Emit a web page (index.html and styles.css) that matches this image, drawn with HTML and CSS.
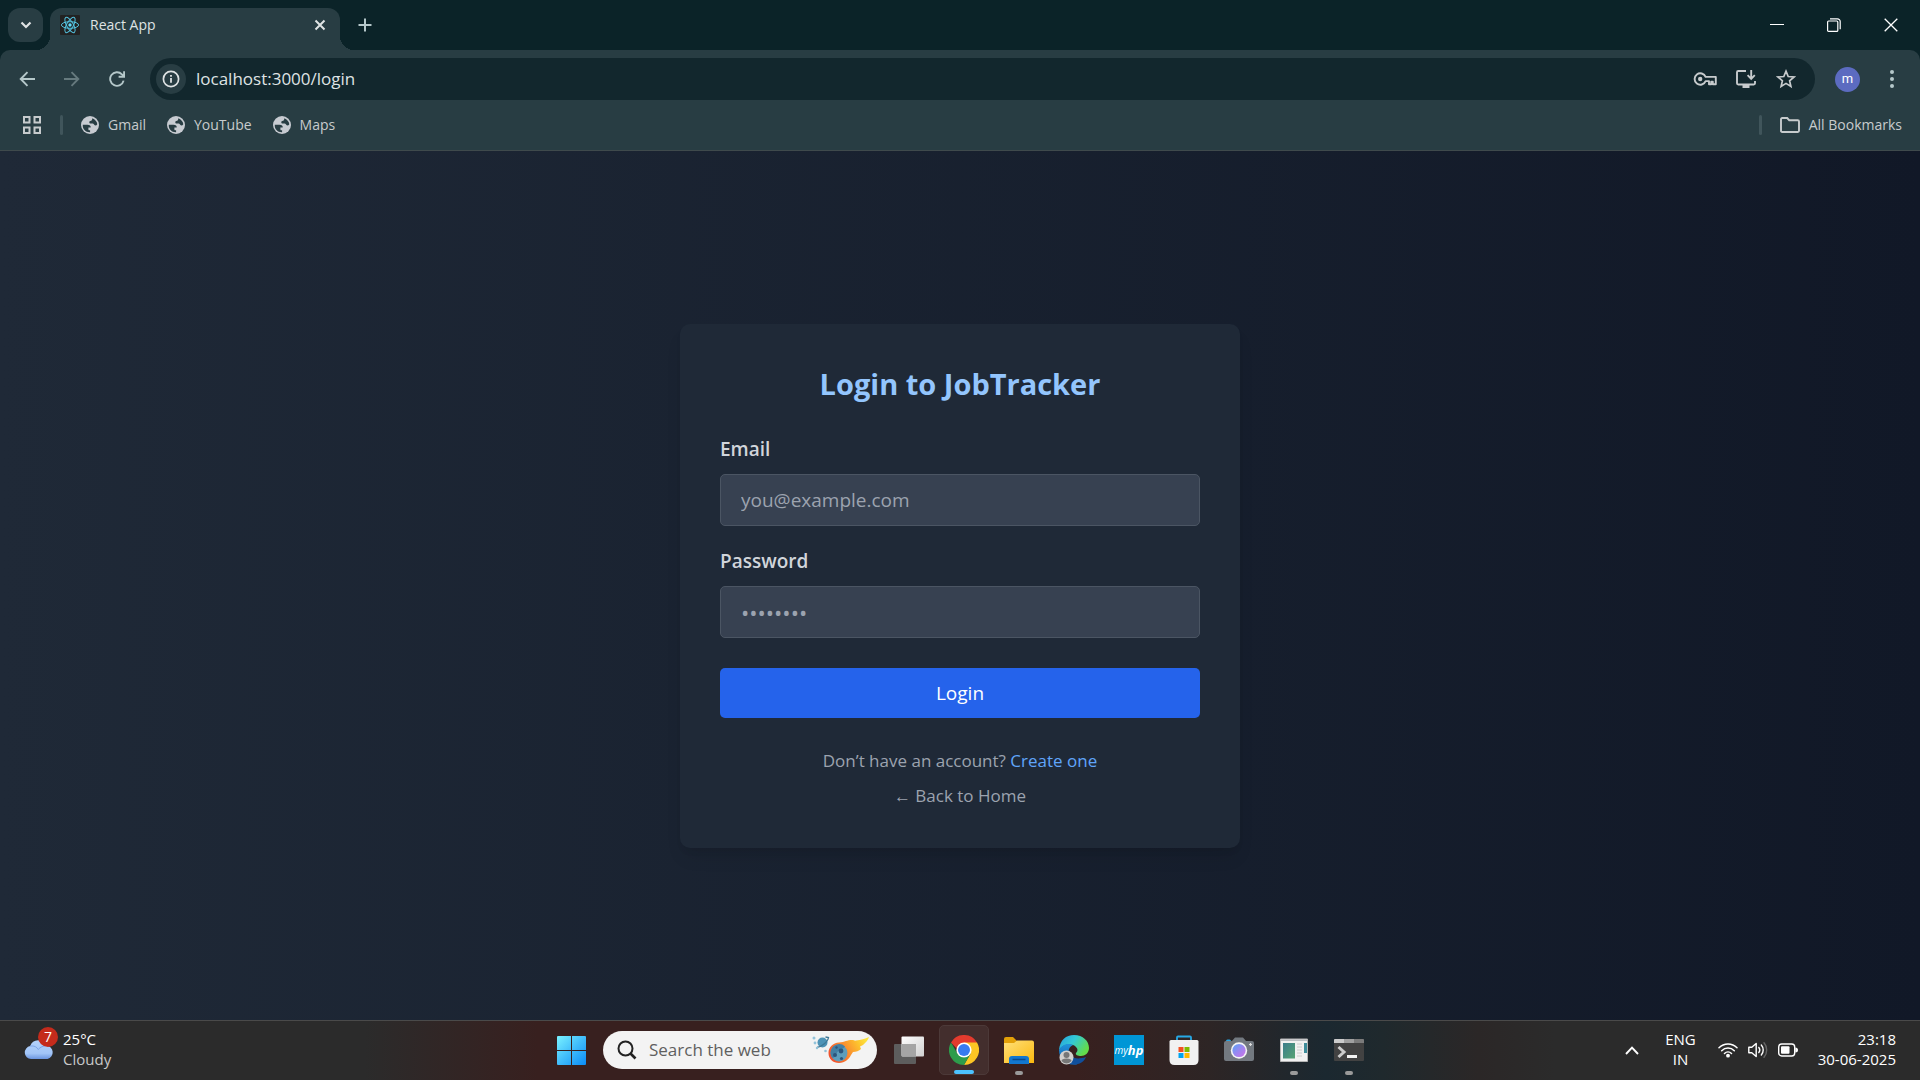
FILE: index.html
```html
<!DOCTYPE html>
<html lang="en">
<head>
<meta charset="utf-8">
<meta name="viewport" content="width=device-width, initial-scale=1">
<title>React App</title>
<link rel="stylesheet" href="styles.css">
</head>
<body>
<svg width="0" height="0" class="sprites" aria-hidden="true">
  <symbol id="globe" viewBox="0 0 18 18"><circle cx="9" cy="9" r="9" fill="#c7cbd1"/><path d="M1.800 8.800h4.600c2.400 0 3.500 1 3.300 2.700H7.400v1.900c0 .9.800.9 1.700.9v2C4.700 16.500 1.300 13 1.800 8.800zM11.300 2.300c2.700 1 4.800 3.400 5 6-1 1.800-2.500 1.500-3.300.1-.5-.8-1.200-1.100-2.700-.9-1.500.1-2.100-.6-2-1.600.2-1.300 1.700-1.200 2.300-1.500.6-.4.600-1.100.7-2.100z" fill="#283d43"/></symbol>
</svg>
<div class="desktop">
  <header class="browser">
    <div class="tab-strip">
      <button class="tab-search" aria-label="Search tabs">
        <svg width="12" height="12" viewBox="0 0 12 12"><path d="M1.500 3.500 6 8l4.500-4.500" fill="none" stroke="currentColor" stroke-width="2.200"/></svg>
      </button>
      <div class="tab">
        <svg class="tab-icon" width="20" height="20" viewBox="0 0 20 20">
          <rect width="20" height="20" rx="1" fill="#222"/>
          <g fill="none" stroke="#53c1de" stroke-width="1">
            <ellipse cx="10" cy="10" rx="8.600" ry="3.300"/>
            <ellipse cx="10" cy="10" rx="8.600" ry="3.300" transform="rotate(60 10 10)"/>
            <ellipse cx="10" cy="10" rx="8.600" ry="3.300" transform="rotate(120 10 10)"/>
          </g>
          <circle cx="10" cy="10" r="1.700" fill="#61dafb"/>
        </svg>
        <span class="tab-title">React App</span>
        <button class="tab-close" aria-label="Close tab">
          <svg width="12" height="12" viewBox="0 0 12 12"><path d="M1.500 1.500l9 9M10.500 1.500l-9 9" stroke="currentColor" stroke-width="2"/></svg>
        </button>
      </div>
      <button class="new-tab" aria-label="New tab">
        <svg width="14" height="14" viewBox="0 0 14 14"><path d="M7 .5v13M.5 7h13" stroke="currentColor" stroke-width="2"/></svg>
      </button>
      <div class="window-controls">
        <button aria-label="Minimize"><svg width="14" height="14" viewBox="0 0 14 14"><path d="M0 6.500h14" stroke="currentColor"/></svg></button>
        <button aria-label="Restore"><svg width="14" height="14" viewBox="0 0 14 14"><g fill="none" stroke="currentColor" stroke-width="1.200"><rect x=".6" y="3" width="10.200" height="10.400" rx="1"/><path d="M3 .8h7.400a2.800 2.800 0 0 1 2.800 2.800v7.600"/></g></svg></button>
        <button aria-label="Close"><svg width="14" height="14" viewBox="0 0 14 14"><path d="M.7.7l12.600 12.600M13.300.7.7 13.300" stroke="currentColor" stroke-width="1.300"/></svg></button>
      </div>
    </div>

    <div class="toolbar">
      <button class="nav-button" aria-label="Back"><svg width="16" height="16" viewBox="0 0 16 16"><path d="M16 8H2M8.500 1.200 1.700 8l6.800 6.800" fill="none" stroke="currentColor" stroke-width="1.900"/></svg></button>
      <button class="nav-button disabled" aria-label="Forward" disabled><svg width="16" height="16" viewBox="0 0 16 16"><path d="M0 8h14M7.500 1.200 14.300 8l-6.800 6.800" fill="none" stroke="currentColor" stroke-width="1.900"/></svg></button>
      <button class="nav-button" aria-label="Reload"><svg width="16" height="16" viewBox="0 0 16 16"><path d="M14.600 9.600A6.800 6.800 0 1 1 12.900 3.300L15 5.400M15.100.3v5.400H9.600" fill="none" stroke="currentColor" stroke-width="1.900"/></svg></button>
      <div class="address-bar">
        <button class="site-info" aria-label="Site information"><svg width="18" height="18" viewBox="0 0 18 18"><circle cx="9" cy="9" r="7.600" fill="none" stroke="currentColor" stroke-width="1.700"/><path d="M9 8v4.800M9 5v1.800" stroke="currentColor" stroke-width="1.800"/></svg></button>
        <input class="url" type="text" aria-label="Address" value="localhost:3000/login">
        <div class="address-actions">
          <button aria-label="Passwords"><svg width="24" height="18" viewBox="0 0 24 18"><path d="M12.600 6.900A5.700 5.700 0 1 0 12.600 11.100H16v3.200h2.200v-2.600h1.600v2.600h3V6.900z" fill="none" stroke="currentColor" stroke-width="1.900" stroke-linejoin="round"/><circle cx="7.200" cy="9" r="2.200" fill="currentColor"/></svg></button>
          <button aria-label="Install app"><svg width="22" height="20" viewBox="0 0 22 20"><path d="M11 2H3.200Q2 2 2 3.200v11.100q0 1.200 1.200 1.200h15.600q1.200 0 1.200-1.200V12" fill="none" stroke="currentColor" stroke-width="1.900"/><path d="M7.500 16h7v3h-7z" fill="currentColor"/><path d="M16.200 1v8.500M12.600 6.200l3.600 3.600 3.600-3.600" fill="none" stroke="currentColor" stroke-width="1.900"/></svg></button>
          <button aria-label="Bookmark this tab"><svg width="20" height="20" viewBox="0 0 20 20"><path d="M10 2.200l2.200 5.300 5.800.5-4.400 3.800 1.300 5.600L10 14.400l-4.900 3 1.300-5.600L2 8l5.800-.5z" fill="none" stroke="currentColor" stroke-width="1.700"/></svg></button>
        </div>
      </div>
      <button class="avatar" aria-label="Profile">m</button>
      <button class="menu-button" aria-label="Menu"><svg width="4" height="18" viewBox="0 0 4 18"><g fill="currentColor"><circle cx="2" cy="2" r="2"/><circle cx="2" cy="9" r="2"/><circle cx="2" cy="16" r="2"/></g></svg></button>
    </div>

    <nav class="bookmarks" aria-label="Bookmarks">
      <button class="apps" aria-label="Apps"><svg width="18" height="18" viewBox="0 0 18 18"><g fill="none" stroke="currentColor" stroke-width="2"><path d="M1 1h5.500v5.500H1zM11.500 1H17v5.500h-5.500zM1 11.500h5.500V17H1zM11.500 11.500H17V17h-5.500z"/></g></svg></button>
      <span class="divider"></span>
      <a class="bookmark" href="#gmail"><svg width="18" height="18"><use href="#globe"/></svg>Gmail</a>
      <a class="bookmark" href="#youtube"><svg width="18" height="18"><use href="#globe"/></svg>YouTube</a>
      <a class="bookmark" href="#maps"><svg width="18" height="18"><use href="#globe"/></svg>Maps</a>
      <div class="all-bookmarks">
        <span class="divider"></span>
        <button class="bookmark"><svg width="20" height="16" viewBox="0 0 20 16"><path d="M1 2.200Q1 1 2.200 1h5l2 2.200h8.600q1.200 0 1.200 1.200v9.400q0 1.200-1.200 1.200H2.200Q1 15 1 13.800z" fill="none" stroke="currentColor" stroke-width="1.900"/></svg>All Bookmarks</button>
      </div>
    </nav>
  </header>

  <main class="page">
    <section class="card">
      <h1 class="card-title">Login to JobTracker</h1>
      <form class="login-form">
        <div class="field">
          <label for="email">Email</label>
          <input id="email" type="email" placeholder="you@example.com">
        </div>
        <div class="field">
          <label for="password">Password</label>
          <input id="password" type="password" placeholder="••••••••">
        </div>
        <button class="login-button" type="submit">Login</button>
      </form>
      <div class="card-links">
        <p>Don’t have an account? <a class="create-link" href="#register">Create one</a></p>
        <p><a href="#home">← Back to Home</a></p>
      </div>
    </section>
  </main>

  <footer class="taskbar">
    <button class="weather">
      <span class="weather-icon">
        <svg width="30" height="20" viewBox="0 0 30 20">
          <defs><linearGradient id="cloud" x1="0" y1="0" x2="0" y2="1"><stop offset="0" stop-color="#b4d2fb"/><stop offset=".7" stop-color="#a2c5f7"/><stop offset="1" stop-color="#6b95e0"/></linearGradient></defs>
          <path d="M7 19a6.500 6.500 0 0 1-.8-12.900A8.600 8.600 0 0 1 22.300 5.600 6.800 6.800 0 0 1 23.500 19z" fill="url(#cloud)"/>
          <path d="M6.200 6.100c4-.8 6.800 1 8 3.400 2-2.400 5-3.600 8.100-3.900" fill="none" stroke="#7ea6e8" stroke-width="1"/>
        </svg>
        <span class="weather-badge">7</span>
      </span>
      <span class="two-line"><span>25°C</span><span class="muted">Cloudy</span></span>
    </button>

    <div class="apps-group">
      <button class="app" aria-label="Start"><svg width="29" height="29" viewBox="0 0 29 29"><defs><linearGradient id="win" gradientUnits="userSpaceOnUse" x1="0" y1="0" x2="29" y2="29"><stop offset="0" stop-color="#7af2ff"/><stop offset=".5" stop-color="#41bdfb"/><stop offset="1" stop-color="#0a8cf7"/></linearGradient></defs><path d="M0 1q0-1 1-1h13v14H0zM15 0h13q1 0 1 1v13H15zM0 15h14v14H1q-1 0-1-1zM15 15h14v13q0 1-1 1H15z" fill="url(#win)"/></svg></button>
      <label class="web-search">
        <svg width="20" height="20" viewBox="0 0 20 20"><circle cx="8.500" cy="8.500" r="7" fill="none" stroke="#222" stroke-width="2"/><path d="M13.500 13.500l5 5" stroke="#222" stroke-width="2.600"/></svg>
        <input type="search" placeholder="Search the web" aria-label="Search the web">
        <svg width="58" height="28" viewBox="0 0 58 28">
          <defs><linearGradient id="flame" gradientUnits="userSpaceOnUse" x1="20" y1="22" x2="54" y2="2"><stop offset="0" stop-color="#f0532f"/><stop offset=".4" stop-color="#f98a30"/><stop offset=".75" stop-color="#fdc22e"/><stop offset="1" stop-color="#fde63c"/></linearGradient></defs>
          <path d="M16.500 17C16.500 11 21 7 27 6.500 33 6 35 4 40 4c2 0 2 .8 4 .6 5-.6 9-1.600 13-3.600-1 3-3 5.500-6 8l-3 1.500 1 2.500c-2 2-5 3-8 3l-2 3c-2 4-6 8-12 8-6 0-10.500-4-10.500-10z" fill="url(#flame)"/>
          <circle cx="27" cy="17" r="8.400" fill="#5d9dbb"/><path d="M20 12a8.400 8.400 0 0 1 13-1.500c-2 3-6 3-8 6s-2 6-5 5q-3-4.500 0-9.500z" fill="#427fa3"/>
          <g fill="#2c557c"><circle cx="29" cy="15" r="2.400"/><circle cx="23" cy="19" r="2"/><circle cx="29.500" cy="22.500" r="1.600"/><circle cx="24.500" cy="11.500" r="1.200"/></g>
          <circle cx="10.500" cy="6.500" r="5" fill="#4e93b6"/><path d="M5 11C8 12 16 6 16.500 1.500l-3-.5" fill="none" stroke="#3f7896" stroke-width="1.300"/>
          <g fill="#93c3da"><circle cx="2" cy="2" r="1.500"/><circle cx="3" cy="7" r="1.400"/><circle cx="5" cy="12" r="1.200"/><circle cx="13.500" cy="15" r="1.300"/></g>
        </svg>
      </label>
      <button class="app" aria-label="Task view"><svg width="30" height="30" viewBox="0 0 30 30"><defs><linearGradient id="tv" x1="0" y1="0" x2="1" y2="1"><stop offset="0" stop-color="#fff"/><stop offset="1" stop-color="#d0d0d0"/></linearGradient></defs><rect x="0" y="9" width="22" height="20" rx="1" fill="#5d5d5d"/><rect x="7.500" y="1.500" width="22.500" height="20" rx="1" fill="url(#tv)"/><path d="M8 9h14v12H8z" fill="#a5a5a5"/></svg></button>
      <button class="app active" aria-label="Chrome"><svg width="30" height="30" viewBox="0 0 30 30"><path d="M2 7.500A15 15 0 0 1 28 7.500L15 15H9z" fill="#e33b2e"/><path d="M28 7.500A15 15 0 0 1 15 30l6.500-11.200L15 7.500z" fill="#fcc624"/><path d="M15 30A15 15 0 0 1 2 7.500L8.500 18.800 15 22.500l6.500-3.700z" fill="#2d9c4b"/><circle cx="15" cy="15" r="7.600" fill="#fff"/><circle cx="15" cy="15" r="6" fill="#377bf0"/></svg></button>
      <button class="app running" aria-label="File Explorer"><svg width="30" height="27" viewBox="0 0 30 27"><defs><linearGradient id="folder" x1="0" y1="0" x2="1" y2="1"><stop offset="0" stop-color="#ffe07a"/><stop offset="1" stop-color="#fbb90f"/></linearGradient></defs><path d="M0 2q0-2 2-2h7l4 4v5H0z" fill="#e3a008"/><path d="M0 6h10l3-2.500h15q2 0 2 2V26H0z" fill="url(#folder)"/><path d="M5 27v-5q0-3 3-3h14q3 0 3 3v5z" fill="#1277cf"/><path d="M8.500 22.500h13" stroke="#0a4a8c" stroke-width="1.500"/></svg></button>
      <button class="app" aria-label="Edge"><svg width="30" height="30" viewBox="0 0 30 30"><defs><linearGradient id="edge" x1="0" y1="0" x2="1" y2=".5"><stop offset="0" stop-color="#259fe0"/><stop offset=".5" stop-color="#33c9d4"/><stop offset="1" stop-color="#63dc4b"/></linearGradient><linearGradient id="edge2" x1="0" y1="0" x2="0" y2="1"><stop offset="0" stop-color="#1f94dc"/><stop offset="1" stop-color="#1259a8"/></linearGradient></defs><path d="M0 15C1 5 7 0 15 0c9 0 15 6 15 13 0 5-4 8-8 8-3 0-6-1-5-3 2-2 2-4 0-6-4-4-13-3-17 3z" fill="url(#edge)"/><path d="M0 15C3 9 10 8 14 10c-4 2-5 5-4 9 1 5 5 8 10 8l-2 2.600C8 31 0 25 0 15z" fill="url(#edge2)"/><path d="M11 15c-1 6 4 11 16 7-2 5-7 8-12 7-6-1-8-9-4-14z" fill="#104f9c"/><circle cx="7.500" cy="22.500" r="7" fill="#d2d0ce"/><circle cx="7.500" cy="20" r="3" fill="#777"/><path d="M2.500 26q0-2.500 5-2.500t5 2.500q-5 5-10 0z" fill="#777"/></svg></button>
      <button class="app" aria-label="myHP"><span class="hp-icon">my<b>hp</b></span></button>
      <button class="app" aria-label="Microsoft Store"><svg width="30" height="30" viewBox="0 0 30 30"><path d="M8 6V2.500q0-1 1-1h12q1 0 1 1V6" fill="none" stroke="#27a9e6" stroke-width="1.800"/><path d="M.5 6.500q0-1.500 1.500-1.500h26q1.500 0 1.500 1.500V25q0 5-5 5h-19q-5 0-5-5z" fill="#f1f1f1"/><path d="M9.500 12h5v5h-5z" fill="#f25022"/><path d="M15.500 12h5v5h-5z" fill="#7fba00"/><path d="M9.500 18h5v5h-5z" fill="#00a4ef"/><path d="M15.500 18h5v5h-5z" fill="#ffb900"/></svg></button>
      <button class="app" aria-label="Camera"><svg width="30" height="26" viewBox="0 0 30 26"><defs><linearGradient id="lens" x1="0" y1="0" x2="1" y2="1"><stop offset="0" stop-color="#56a6f5"/><stop offset=".5" stop-color="#9a86f0"/><stop offset="1" stop-color="#cf72e6"/></linearGradient></defs><path d="M2 6V4q0-1.500 1.500-1.500h2Q7 2.500 7 4v2z" fill="#2aa3e0"/><path d="M0 6q0-2 2-2h6l3-3.500h8L22 4h6q2 0 2 2v16q0 2-2 2H2q-2 0-2-2z" fill="#737980"/><circle cx="15" cy="13.500" r="8.200" fill="#f4f4f4"/><circle cx="15" cy="13.500" r="6.600" fill="url(#lens)"/><path d="M26.500 6v3M25 7.500h3" stroke="#ddd" stroke-width="1.200"/></svg></button>
      <button class="app running" aria-label="Window preview"><svg width="28" height="24" viewBox="0 0 28 24"><defs><linearGradient id="pane" x1="0" y1="0" x2="1" y2="1"><stop offset="0" stop-color="#3b7d8c"/><stop offset="1" stop-color="#57a373"/></linearGradient></defs><path d="M.5 1h27v22.500H.5z" fill="#f1f1f1" stroke="#b5b5b5"/><path d="M1 1.500h26V3H1z" fill="#bcbfc3"/><path d="M3 5h12v15.500H3z" fill="url(#pane)"/><path d="M17 6h5M17 9h5M17 12h5M17 15h5M17 18h5" stroke="#ccc"/><path d="M24 5h3v10h-3z" fill="#3e8c9a"/></svg></button>
      <button class="app running" aria-label="Terminal"><svg width="30" height="22" viewBox="0 0 30 22"><rect width="30" height="22" rx="1" fill="#424242"/><path d="M0 1q0-1 1-1h9v4H0z" fill="#cbcbcb"/><path d="M10 0h10v4H10z" fill="#a0a0a0"/><path d="M20 0h9q1 0 1 1v3H20z" fill="#7b7b7b"/><path d="M4.500 8l5.500 5-5.500 5" fill="none" stroke="#ccc" stroke-width="3"/><path d="M13 17.500h10" stroke="#f4f4f4" stroke-width="3"/></svg></button>
    </div>

    <div class="tray">
      <button class="tray-more" aria-label="Show hidden icons"><svg width="14" height="9" viewBox="0 0 14 9"><path d="M1 8l6-6.300L13 8" fill="none" stroke="currentColor" stroke-width="1.900"/></svg></button>
      <button class="two-line language"><span>ENG</span><span>IN</span></button>
      <button class="system" aria-label="Network, sound and battery">
        <svg width="20" height="16" viewBox="0 0 20 16"><g fill="none" stroke="currentColor" stroke-width="1.500" stroke-linecap="round"><path d="M1 5.800a12.700 12.700 0 0 1 18 0M3.700 8.700a8.900 8.900 0 0 1 12.600 0M6.500 11.500a5 5 0 0 1 7 0"/></g><circle cx="10" cy="13.700" r="1.900" fill="currentColor"/></svg>
        <svg width="20" height="18" viewBox="0 0 20 18"><g fill="none" stroke="currentColor" stroke-width="1.400" stroke-linecap="round" stroke-linejoin="round"><path d="M.8 6.300h3L8.200 2.500v13l-4.400-3.800h-3zM10.800 6.400a4.200 4.200 0 0 1 0 5.200M13.300 4a7.500 7.500 0 0 1 0 10"/><path d="M16 1.800a11 11 0 0 1 0 14.400" stroke="#666"/></g></svg>
        <svg width="20" height="14" viewBox="0 0 20 14"><rect x=".7" y="1" width="16" height="12" rx="3" fill="none" stroke="currentColor" stroke-width="1.400"/><rect x="3" y="3.300" width="8.500" height="7.400" rx="1" fill="currentColor"/><path d="M17.300 4.500q2.700 0 2.700 2.500t-2.700 2.500z" fill="currentColor"/></svg>
      </button>
      <button class="two-line clock"><span>23:18</span><span>30-06-2025</span></button>
    </div>
  </footer>
</div>
</body>
</html>
```

FILE: styles.css
```css
*,
*::before,
*::after {
  box-sizing: border-box;
}

body {
  margin: 0;
  font-family: "Open Sans", "Noto Sans", sans-serif;
  font-size: 15px;
  line-height: 20px;
  color: #fff;
  background: #111827;
}

button,
input {
  margin: 0;
  padding: 0;
  border: 0;
  background: none;
  color: inherit;
  font: inherit;
}

button {
  display: flex;
  align-items: center;
  justify-content: center;
}

a {
  color: inherit;
  text-decoration: none;
}

p,
h1 {
  margin: 0;
}

svg {
  display: block;
  flex: none;
}

.sprites {
  position: absolute;
}

.desktop {
  display: flex;
  flex-direction: column;
  min-height: 100vh;
}

/* Browser frame */

.browser {
  background: #0b2328;
  color: #dfe3e4;
}

.tab-strip {
  display: flex;
  height: 50px;
  padding: 8px 1px 0 8px;
}

.tab-search {
  width: 35px;
  height: 34px;
  margin-right: 7px;
  border-radius: 12px;
  background: #283d43;
}

.tab {
  position: relative;
  display: flex;
  align-items: center;
  gap: 10px;
  width: 290px;
  padding: 0 12px 8px 10px;
  border-radius: 12px 12px 0 0;
  background: #283d43;
}

/* Flared feet where the active tab meets the toolbar */
.tab::before,
.tab::after {
  content: "";
  position: absolute;
  bottom: 0;
  width: 14px;
  height: 14px;
}

.tab::before {
  right: 100%;
  background: radial-gradient(circle at 0 0, transparent 14px, #283d43 14px);
}

.tab::after {
  left: 100%;
  background: radial-gradient(circle at 100% 0, transparent 14px, #283d43 14px);
}

.tab-title {
  flex: 1;
  font-size: 14px;
}

.tab-close {
  width: 16px;
  height: 20px;
}

.new-tab {
  width: 34px;
  height: 34px;
  margin-left: 8px;
  color: #b5c8ca;
}

.window-controls {
  display: flex;
  margin-left: auto;
  color: #fff;
}

.window-controls button {
  width: 57px;
  height: 34px;
}

.toolbar {
  display: flex;
  align-items: center;
  height: 54px;
  padding: 4px 16px 0 10px;
  border-radius: 10px 10px 0 0;
  background: #283d43;
}

.nav-button {
  width: 34px;
  height: 34px;
  margin-right: 11px;
  color: #b5c8ca;
}

.nav-button.disabled {
  color: #667a7e;
}

.address-bar {
  display: flex;
  flex: 1;
  align-items: center;
  height: 42px;
  margin-left: 5px;
  padding: 0 18px 0 6px;
  border-radius: 21px;
  background: #12272d;
}

.site-info {
  width: 30px;
  height: 30px;
  border-radius: 15px;
  background: #283d43;
}

.url {
  flex: 1;
  margin-left: 10px;
  font-size: 17px;
}

.address-actions {
  display: flex;
  gap: 18px;
  color: #c7cbcd;
}

.address-actions button {
  min-width: 22px;
}

.avatar {
  width: 25px;
  height: 25px;
  margin-left: 20px;
  border-radius: 50%;
  background: #5c6bc0;
  color: #fff;
  font-family: Roboto, sans-serif;
  font-size: 13px;
}

.menu-button {
  width: 24px;
  height: 34px;
  margin-left: 20px;
  color: #b5c8ca;
}

.bookmarks {
  display: flex;
  align-items: center;
  height: 47px;
  padding: 0 18px 4px 23px;
  border-bottom: 1px solid #3f4a4c;
  background: #283d43;
  color: #c7cbcd;
  font-size: 14px;
}

.divider {
  width: 3px;
  height: 20px;
  border-radius: 2px;
  background: #40555b;
}

.apps {
  margin-right: 19px;
}

.bookmark {
  display: flex;
  align-items: center;
  gap: 9px;
  margin-left: 18px;
}

.bookmark + .bookmark {
  margin-left: 21px;
}

.all-bookmarks {
  display: flex;
  align-items: center;
  margin-left: auto;
}

/* Login page */

.page {
  display: flex;
  flex: 1;
  align-items: center;
  justify-content: center;
  padding: 40px 20px;
  background: linear-gradient(to right, #1f2937, #111827);
}

.card {
  width: 100%;
  max-width: 560px;
  padding: 40px;
  border-radius: 10px;
  background: #1f2937;
  box-shadow: 0 12px 18px -4px rgba(0, 0, 0, 0.1), 0 5px 7px -2px rgba(0, 0, 0, 0.05);
}

.card-title {
  margin-bottom: 30px;
  color: #93c5fd;
  font-size: 29px;
  font-weight: 700;
  line-height: 40px;
  text-align: center;
}

.login-form {
  display: flex;
  flex-direction: column;
  gap: 20px;
}

.field {
  display: flex;
  flex-direction: column;
  gap: 10px;
}

.field label {
  color: #d1d5db;
  font-size: 19px;
  font-weight: 600;
  line-height: 30px;
}

.field input {
  height: 52px;
  padding: 0 20px;
  border: 1px solid #4b5563;
  border-radius: 5px;
  background: #374151;
  font-size: 19px;
}

.field input[type="password"] {
  font-size: 22px;
}

.field input::placeholder {
  color: #9ca3af;
}

.login-button {
  height: 50px;
  margin-top: 10px;
  border-radius: 5px;
  background: #2563eb;
  font-size: 19px;
  font-weight: 500;
}

.card-links {
  display: flex;
  flex-direction: column;
  gap: 10px;
  margin-top: 30px;
  color: #9ca3af;
  font-size: 17px;
  line-height: 25px;
  text-align: center;
}

.create-link {
  color: #60a5fa;
}

/* Taskbar */

.taskbar {
  display: grid;
  grid-template-columns: 1fr auto 1fr;
  align-items: center;
  height: 60px;
  padding-bottom: 1px;
  border-top: 1px solid #4a4a4a;
  background: linear-gradient(to right, #2b2b2b 19%, #38201f 28%, #38201f 56%, #2d2525 63%, #1b2830 69%, #1f292d 72%, #2b2727 77%, #2b2b2b 81%);
}

.weather {
  justify-self: start;
  gap: 9px;
  margin-left: 24px;
}

.weather-icon {
  position: relative;
}

.weather-badge {
  position: absolute;
  top: -13px;
  right: -4px;
  width: 20px;
  height: 20px;
  border-radius: 50%;
  background: #c42b1c;
  font-size: 14px;
}

.two-line {
  display: flex;
  flex-direction: column;
  align-items: flex-start;
  padding-bottom: 2px;
}

.muted {
  color: #c8c8c8;
}

.apps-group {
  display: flex;
  align-items: center;
  gap: 5px;
}

.app {
  position: relative;
  width: 50px;
  height: 50px;
  border-radius: 5px;
}

.app.active {
  border: 1px solid #4c3938;
  background: #432e2d;
}

.app.active::after,
.app.running::after {
  content: "";
  position: absolute;
  bottom: 0;
  left: 50%;
  width: 8px;
  height: 4px;
  border-radius: 2px;
  background: #9a9a9a;
  transform: translateX(-50%);
}

.app.active::after {
  width: 20px;
  background: #4cc2ff;
}

.web-search {
  display: flex;
  align-items: center;
  width: 274px;
  height: 38px;
  margin: 0 2px;
  padding: 0 7px 0 14px;
  border-radius: 19px;
  background: #f3f3f3;
}

.web-search input {
  flex: 1;
  min-width: 0;
  margin-left: 12px;
  font-size: 17px;
}

.web-search input::placeholder {
  color: #5f5f5f;
}

.hp-icon {
  display: flex;
  align-items: center;
  justify-content: center;
  width: 30px;
  height: 30px;
  background: #0096d6;
  font-size: 10px;
  font-style: italic;
}

.hp-icon b {
  font-size: 13px;
}

.tray {
  display: flex;
  align-items: center;
  justify-self: end;
  margin-right: 24px;
}

.tray-more {
  margin-right: 26px;
}

.language {
  align-items: center;
}

.system {
  gap: 10px;
  margin: 0 20px 0 22px;
}

.clock {
  align-items: flex-end;
}
```
